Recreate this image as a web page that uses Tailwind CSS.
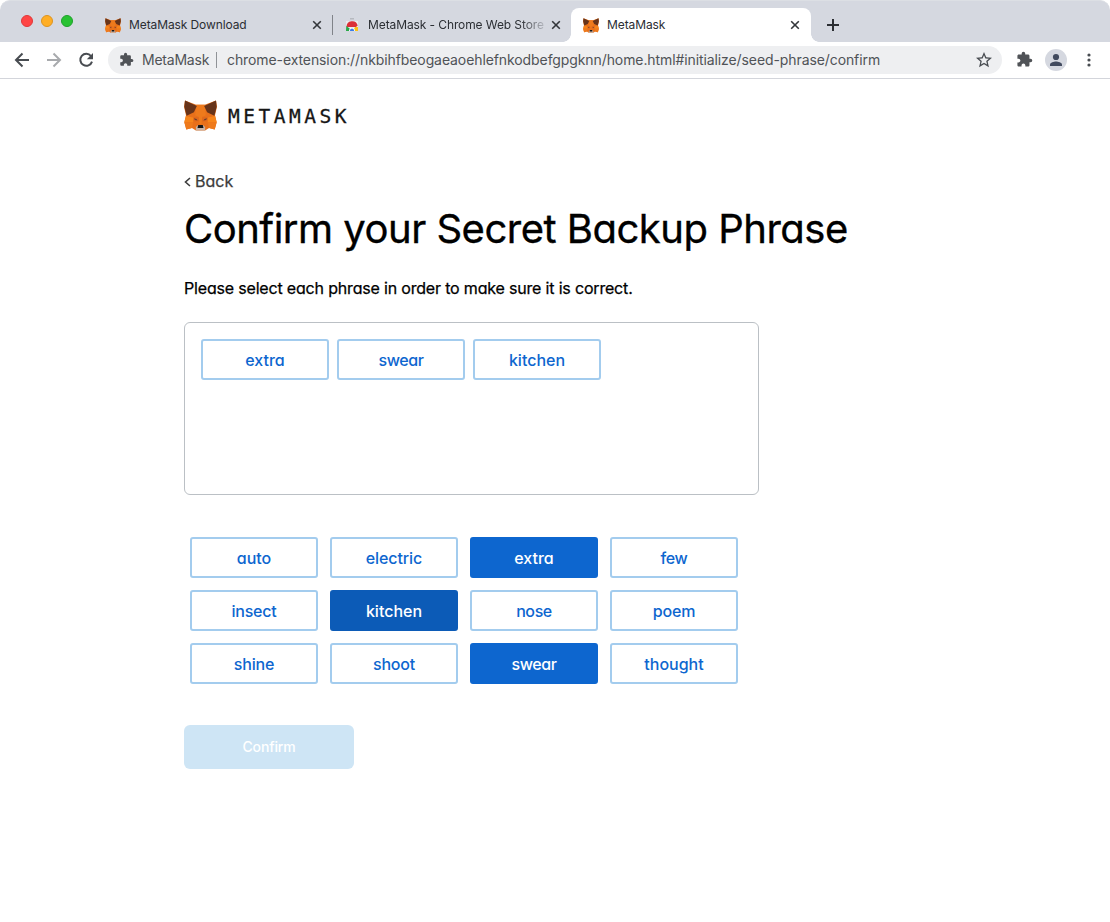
<!DOCTYPE html>
<html lang="en">
<head>
<meta charset="utf-8">
<title>MetaMask</title>
<script src="https://cdn.jsdelivr.net/npm/@tailwindcss/browser@4"></script>
</head>
<body class="h-[922px] w-[1110px] overflow-hidden bg-white font-['Inter',sans-serif] text-black">
<svg class="hidden">
  <symbol id="fox" viewBox="0 0 100 93">
    <path fill="#e8701a" d="M3 1 37 14H63L97 1 100 20 94 46 99 67 93 89 76 84 64 92H36L24 84 7 89 1 67 6 46 0 20Z"/>
    <path fill="#ee7a1c" d="M37 14H63L66 46 56 52 53 72H47L44 52 34 46Z"/>
    <path fill="#67341a" d="M3 1 39 18 30 37 8 47 1 20ZM97 1 61 18 70 37 92 47 99 20Z"/>
    <path fill="#f6851b" d="M6 48 30 53 28 67H1ZM94 48 70 53 72 67H99Z"/>
    <path fill="#ee7a1c" d="M1 67H28L24 84 7 89ZM99 67H72L76 84 93 89Z"/>
    <path fill="#e0691c" d="M28 52 44 50 46 64 29 65ZM72 52 56 50 54 64 71 65Z"/>
    <path fill="#6b4030" d="M30 55 38 57 41 62 33 60ZM70 55 62 57 59 62 67 60Z"/>
    <path fill="#c9b3a5" d="M36 81 42 76H58L64 81V92H36Z"/>
    <path fill="#161616" d="M43 75H57L59 84H41Z"/>
  </symbol>
  <symbol id="x" viewBox="0 0 10 10"><path d="M1.2 1.2l7.6 7.6M8.8 1.2l-7.6 7.6" stroke="#33363a" stroke-width="1.6" fill="none"/></symbol>
  <symbol id="puzzle" viewBox="0 0 24 24"><path fill="currentColor" d="M20.5 11H19V7c0-1.1-.9-2-2-2h-4V3.500a2.500 2.500 0 0 0-5 0V5H4c-1.100 0-2 .9-2 2v3.800h1.500c1.500 0 2.700 1.200 2.700 2.700S5 16.200 3.500 16.200H2V20c0 1.100.9 2 2 2h3.800v-1.500c0-1.500 1.200-2.700 2.700-2.700s2.700 1.200 2.700 2.700V22H17c1.100 0 2-.9 2-2v-4h1.500a2.500 2.500 0 0 0 0-5z"/></symbol>
</svg>

<div class="h-[42px] bg-white">
<header class="flex h-[42px] items-start rounded-t-[10px] border-t border-[#dcdfe4] bg-[#d5d8e0] text-[12px] leading-[16px] text-[#2b2e33]">
  <div class="ml-[21px] mt-[14px] flex gap-2">
    <span class="size-3 rounded-full border border-[#e0383a] bg-[#ff4545]"></span>
    <span class="size-3 rounded-full border border-[#dd9420] bg-[#ffae25]"></span>
    <span class="size-3 rounded-full border border-[#1fa12b] bg-[#28c232]"></span>
  </div>
  <div class="ml-[32px] mt-[16px] flex h-4 w-[227px] items-center">
    <svg class="h-[15px] w-4"><use href="#fox"/></svg>
    <span class="ml-2 grow tracking-[-0.1px]">MetaMask Download</span>
    <svg class="mr-[10px] size-[10px]"><use href="#x"/></svg>
  </div>
  <div class="mt-[14px] h-5 w-px bg-[#808389]"></div>
  <div class="ml-[12px] mt-[16px] flex h-4 w-[226px] items-center">
    <svg class="size-[14px]" viewBox="0 0 14 14">
      <path fill="#e9ebee" d="M1 3h12v10H1z"/><path fill="#b6b9bf" d="M5 0h4v1.500H5z"/>
      <path fill="#db2f38" d="M1.500 9a5.700 5.700 0 0 1 11.200-1.500L11 9H1.500z"/>
      <path fill="#2aa84a" d="M1.200 8 4 10 7 13H1z"/>
      <path fill="#fbc116" d="M8 13 10 9h3v4z"/>
      <path fill="#fff" d="M4 13a3 3 0 0 1 6 0z"/><path fill="#3b7de8" d="M4.800 13a2.200 2.600 0 0 1 4.400 0z"/>
    </svg>
    <span class="ml-[9px] w-[177px] whitespace-nowrap tracking-[-0.1px] [mask-image:linear-gradient(to_right,black_86%,rgb(0_0_0/0.15))]">MetaMask - Chrome Web Store</span>
    <svg class="ml-[6px] size-[10px] shrink-0"><use href="#x"/></svg>
  </div>
  <div class="relative mt-[7px] flex h-[34px] w-[240px] items-center rounded-t-lg bg-white pl-3 pr-[11px]">
    <span class="absolute bottom-0 -left-2 size-2 bg-[radial-gradient(circle_at_0_0,transparent_7.5px,white_8px)]"></span>
    <span class="absolute bottom-0 -right-2 size-2 bg-[radial-gradient(circle_at_100%_0,transparent_7.5px,white_8px)]"></span>
    <svg class="h-[15px] w-4"><use href="#fox"/></svg>
    <span class="ml-2 grow tracking-[-0.1px]">MetaMask</span>
    <svg class="size-[10px]"><use href="#x"/></svg>
  </div>
  <svg class="ml-[16px] mt-[18px] size-3" viewBox="0 0 12 12"><path d="M6 0v12M0 6h12" stroke="#2b2e33" stroke-width="2"/></svg>
</header>
</div>

<nav class="flex h-[37px] items-center border-b border-[#d3d5db] text-[14px] leading-[20px] text-[#505357]">
  <svg class="ml-[14px] size-4" viewBox="0 0 16 16" fill="none" stroke="#484c51" stroke-width="2"><path d="M15 8H2.500M8.500 1.500 2 8l6.500 6.500"/></svg>
  <svg class="ml-[16px] size-4" viewBox="0 0 16 16" fill="none" stroke="#a8aaad" stroke-width="2"><path d="M1 8h12.500M7.500 1.500 14 8l-6.500 6.500"/></svg>
  <svg class="ml-[16px] size-4" viewBox="0 0 16 16"><path d="M13 4A6 6 0 1 0 14 9.600" fill="none" stroke="#484c51" stroke-width="2"/><path d="M15 1v6.200H8.800z" fill="#484c51"/></svg>
  <div class="ml-[14px] flex h-7 w-[894px] items-center rounded-full bg-[#eeeff1]">
    <svg class="-mt-[2px] ml-[11px] size-[15px] text-[#505357]"><use href="#puzzle"/></svg>
    <span class="ml-[8px] w-[67px] tracking-[-0.22px]">MetaMask</span>
    <span class="ml-[7px] h-4 w-px bg-[#909397]"></span>
    <span class="ml-[10px] grow tracking-[-0.095px]">chrome-extension://nkbihfbeogaeaoehlefnkodbefgpgknn/home.html#initialize/seed-phrase/confirm</span>
    <svg class="mr-[10px] size-4" viewBox="2 2 20 20"><path fill="#484c51" d="M22 9.240l-7.190-.62L12 2 9.190 8.630 2 9.240l5.460 4.730L5.820 21 12 17.270 18.180 21l-1.630-7.030L22 9.240zM12 15.400l-3.760 2.270 1-4.280-3.320-2.880 4.380-.38L12 6.100l1.710 4.040 4.380.38-3.320 2.880 1 4.280L12 15.400z"/></svg>
  </div>
  <svg class="-mt-px ml-[14px] size-[17px] text-[#505357]"><use href="#puzzle"/></svg>
  <svg class="ml-[12px] size-[22px]" viewBox="0 0 22 22"><circle cx="11" cy="11" r="11" fill="#d5d8e0"/><circle cx="11" cy="8" r="3.100" fill="#414a5e"/><path fill="#414a5e" d="M5 17v-1.600c0-2 4-3 6-3s6 1 6 3V17z"/></svg>
  <svg class="ml-[19.500px] h-[14px] w-[4px]" viewBox="0 0 4 14" fill="#484c51"><circle cx="2" cy="2" r="1.600"/><circle cx="2" cy="7" r="1.600"/><circle cx="2" cy="12" r="1.600"/></svg>
</nav>

<main class="ml-[184px] flex w-[720px] flex-col items-start [font-feature-settings:'cv11']">
  <div class="mt-[21px] flex h-8 items-center">
    <svg class="-mt-px h-[31px] w-[33px]"><use href="#fox"/></svg>
    <span class="ml-[11px] pt-[2px] font-['DejaVu_Sans_Mono',monospace] text-[19.5px] leading-[32px] tracking-[3.5px] text-[#161616] [-webkit-text-stroke:0.3px_#161616]">METAMASK</span>
  </div>
  <a class="mt-[39px] flex h-[20px] items-center text-[16px] leading-[20px] text-[#3c3c3c] [-webkit-text-stroke:0.25px_#3c3c3c]">
    <svg class="mr-[4px] mt-px h-[10px] w-[7px]" viewBox="0 0 7 10"><path d="M6 1 1.500 5 6 9" fill="none" stroke="#3c3c3c" stroke-width="1.600"/></svg>Back</a>
  <h1 class="mt-[14px] h-[48px] whitespace-nowrap text-[40px] leading-[48px] tracking-[-0.5px] [-webkit-text-stroke:0.35px_black]">Confirm your Secret Backup Phrase</h1>
  <p class="mt-[24px] h-[22px] text-[16px] leading-[22px] tracking-[-0.18px] [-webkit-text-stroke:0.25px_black]">Please select each phrase in order to make sure it is correct.</p>
  <div class="mt-[23px] flex h-[173px] w-[575px] items-start gap-2 rounded-md border border-[#bbc0c5] p-4 text-[16px] font-medium text-[#0d66cf]">
    <div class="h-[41px] w-32 rounded-[3px] border-2 border-[#a3ccee] text-center leading-[38px]">extra</div>
    <div class="h-[41px] w-32 rounded-[3px] border-2 border-[#a3ccee] text-center leading-[38px] tracking-[-0.4px]">swear</div>
    <div class="h-[41px] w-32 rounded-[3px] border-2 border-[#a3ccee] text-center leading-[38px]">kitchen</div>
  </div>
  <div class="ml-[6px] mt-[42px] grid grid-cols-[repeat(4,128px)] gap-3 text-center text-[16px] font-medium leading-[38px] text-[#0d66cf]">
    <div class="h-[41px] rounded-[3px] border-2 border-[#a3ccee]">auto</div>
    <div class="h-[41px] rounded-[3px] border-2 border-[#a3ccee] tracking-[-0.1px]">electric</div>
    <div class="h-[41px] rounded-[3px] border-2 border-[#0d66cf] bg-[#0d66cf] text-white">extra</div>
    <div class="h-[41px] rounded-[3px] border-2 border-[#a3ccee] tracking-[-0.3px]">few</div>
    <div class="h-[41px] rounded-[3px] border-2 border-[#a3ccee] tracking-[-0.2px]">insect</div>
    <div class="h-[41px] rounded-[3px] border-2 border-[#0c5bb7] bg-[#0c5bb7] text-white">kitchen</div>
    <div class="h-[41px] rounded-[3px] border-2 border-[#a3ccee] tracking-[-0.4px]">nose</div>
    <div class="h-[41px] rounded-[3px] border-2 border-[#a3ccee] tracking-[-0.2px]">poem</div>
    <div class="h-[41px] rounded-[3px] border-2 border-[#a3ccee] tracking-[-0.2px]">shine</div>
    <div class="h-[41px] rounded-[3px] border-2 border-[#a3ccee] tracking-[-0.2px]">shoot</div>
    <div class="h-[41px] rounded-[3px] border-2 border-[#0d66cf] bg-[#0d66cf] tracking-[-0.4px] text-white">swear</div>
    <div class="h-[41px] rounded-[3px] border-2 border-[#a3ccee]">thought</div>
  </div>
  <button class="mt-[41px] h-[44px] w-[170px] rounded-md bg-[#cee5f5] text-[14px] font-medium leading-[44px] tracking-[-0.15px] text-white">Confirm</button>
</main>
</body>
</html>
